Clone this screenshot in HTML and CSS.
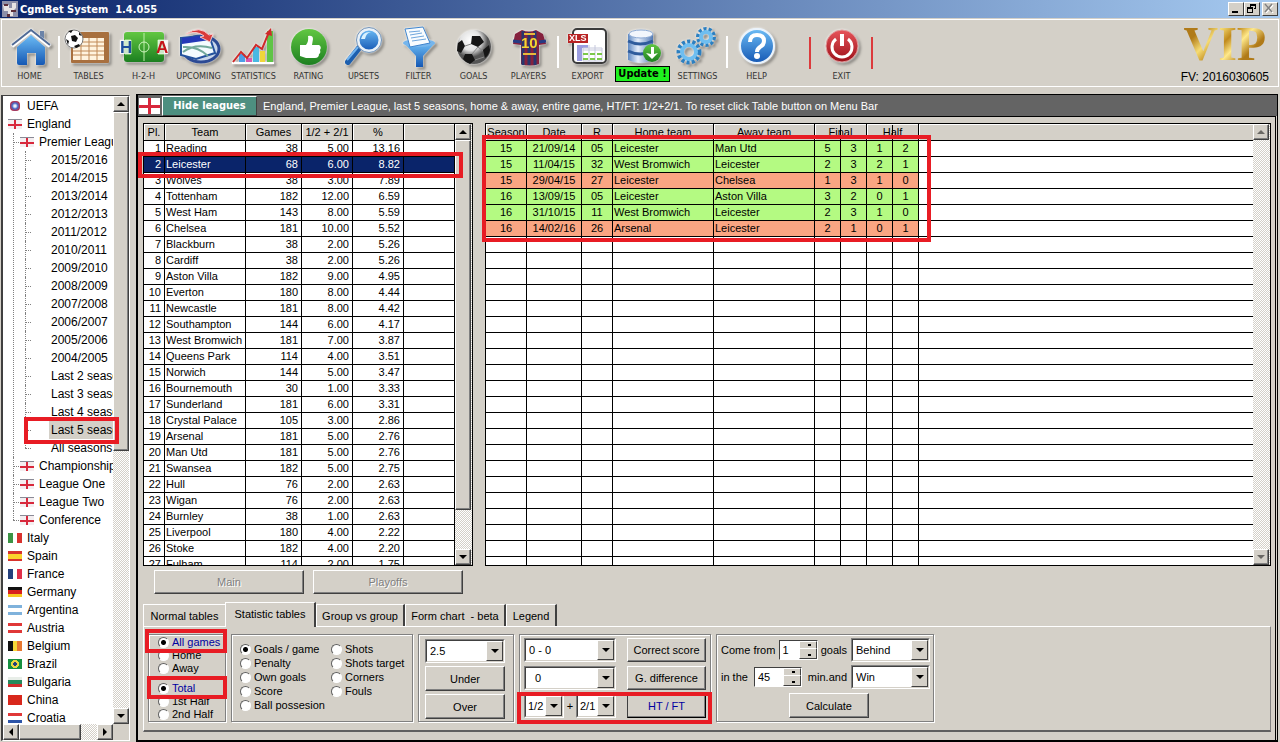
FILE: index.html
```
<!DOCTYPE html>
<html lang="en">
<head>
    <meta charset="utf-8">
    <title>CgmBet System 1.4.055</title>
    <link rel="stylesheet" href="styles.css">
</head>
<body>
    <header class="titlebar">
        <svg class="app-icon" width="16" height="16" viewBox="0 0 16 16"><rect width="16" height="16" fill="#8d8fa8"/><path d="M1 4h6v3h3V2h4v5l-3 3v5H6v-5H2z" fill="#e8e4e4"/><path d="M2 3h4v2H2zM9 9h5v2H9zM5 13h3v3H5z" fill="#5c2f3a"/></svg>
        <h1 class="title">CgmBet System&nbsp; 1.4.055</h1>
        <div class="window-buttons">
            <button class="win-btn" aria-label="Minimize"><svg width="12" height="10"><path d="M3 8h6v2H3z"/></svg></button>
            <button class="win-btn" aria-label="Restore"><svg width="12" height="10"><path d="M5 1h6v5H9V5h1V3H6v1H5zM2 4h6v6H2zM3 6v3h4V6z" fill-rule="evenodd"/></svg></button>
            <button class="win-btn win-close" aria-label="Close"><svg width="12" height="10"><path d="M3 2l7 8M10 2L3 10" stroke="#fff" stroke-width="1.500"/><path d="M2 1l7 8M9 1L2 9" stroke="#808080" stroke-width="1.500"/></svg></button>
        </div>
    </header>

    <nav class="toolbar">
        <button class="tool">
            <svg class="icon" viewBox="0 0 48 42"><path d="M34 5h4v9l-4-4z" fill="#6b83a8"/><path d="M11 21L25 9l14 12v16q0 2-2 2h-7V27h-9v12h-8q-2 0-2-2z" fill="url(#blue)"/><path d="M6 20L25 5l19 15" fill="none" stroke="#fff" stroke-width="4"/><path d="M6 19L25 4l19 15" fill="none" stroke="#516b96" stroke-width="2"/></svg>
            <span>HOME</span>
        </button>
        <i class="sep"></i>
        <button class="tool">
            <svg class="icon" viewBox="0 0 48 42"><rect x="6" y="6" width="38" height="31" rx="1" fill="#a8703f"/><path d="M8 12h31v22H8z" fill="#fff3df"/><path d="M8 16h31M8 20h31M8 25h31M8 29h31M16 12v22M24 12v22M32 12v22" stroke="#c08956"/><circle cx="9" cy="13" r="9" fill="#fff" stroke="#777"/><path d="M6 10l4-1 3 3-2 4-4-1zM3 5l5-1-2 3zM14 6l3 4-3-1zM1 13l3 2-1 4zM9 20l5-2 1 2-4 2z" fill="#111"/></svg>
            <span>TABLES</span>
        </button>
        <button class="tool">
            <svg class="icon" viewBox="0 0 48 42"><rect x="4" y="6" width="40" height="30" rx="3" fill="url(#green)"/><path d="M24 7v28M5 14h6v14H5M44 14h-6v14h6" fill="none" stroke="#bdf0a8"/><circle cx="24" cy="21" r="5" fill="none" stroke="#d0f5c2"/><path d="M0 14h11v14H0zM38 14h10v14H38z" fill="#fff" opacity=".75"/><text x="0" y="27" font-size="17" class="letter" fill="#1d4f9d">H</text><text x="36" y="27" font-size="17" class="letter" fill="#c4141a">A</text></svg>
            <span>H-2-H</span>
        </button>
        <button class="tool">
            <svg class="icon" viewBox="0 0 48 42"><ellipse cx="26" cy="23" rx="18" ry="13" fill="#c8d6ea" stroke="#2c4a94" stroke-width="3"/><path d="M6 12l28-3 6 18-19 6-15-4z" fill="#f4fbff" stroke="#24529d" stroke-width="2"/><path d="M7 12l27-3 1 5-28 4z" fill="#2438b8"/><path d="M8 21q15-1 25 9M8 26q12-9 29-4" fill="none" stroke="#72a99b" stroke-width="2"/><path d="M11 8Q25-1 34 9l4-1-3 8-10-5 4-1Q22 4 11 8z" fill="#d93a3b" stroke="#f6c8c8"/></svg>
            <span>UPCOMING</span>
        </button>
        <button class="tool">
            <svg class="icon" viewBox="0 0 48 42"><path d="M9 28h6v9H9z" fill="#4d9ee8"/><path d="M16 32h6v5h-6z" fill="#d85ab3"/><path d="M23 21h6v16h-6z" fill="#49b8e3"/><path d="M30 25h5v12h-5z" fill="#f0d63a"/><path d="M37 5h6v32h-6z" fill="#5fc447"/><path d="M2 37h42" stroke="#fff" stroke-width="2"/><path d="M3 36l8-10 6 6 9-13 6 4 7-17" fill="none" stroke="#cf2a2b" stroke-width="2"/><path d="M35 8l6-6 1 8z" fill="#cf2a2b"/></svg>
            <span>STATISTICS</span>
        </button>
        <button class="tool">
            <svg class="icon" viewBox="0 0 48 42"><circle cx="24" cy="21" r="18" fill="url(#green)"/><path d="M15 19h6q3-4 2-9 5-1 5 3l-1 6h7q3 2 1 5 1 3-1 4 0 4-4 4H21l-6-2z" fill="#fff"/></svg>
            <span>RATING</span>
        </button>
        <button class="tool">
            <svg class="icon" viewBox="0 0 48 42"><path d="M19 22L8 36" stroke="#1d5fae" stroke-width="6" stroke-linecap="round"/><path d="M18 21L7 34" stroke="#72b4ef" stroke-width="2"/><circle cx="29" cy="14" r="11" fill="url(#blue)" stroke="#e9f1f8" stroke-width="3"/><circle cx="29" cy="14" r="12.500" fill="none" stroke="#7293b8"/><path d="M21 13q2-8 10-7-5 1-6 7z" fill="#d9f2ff"/></svg>
            <span>UPSETS</span>
        </button>
        <button class="tool">
            <svg class="icon" viewBox="0 0 48 42"><path d="M9 17h31L28 30v11h-7V30z" fill="url(#blue)"/><ellipse cx="24" cy="17" rx="16" ry="4" fill="#75b5ec"/><path d="M10 3l18-2 7 16-20 4z" fill="#f8fcff" stroke="#3f85ce"/><path d="M14 6l11-1M15 9l12-2M16 12l13-2M17 15l14-2" stroke="#6fa6dc"/></svg>
            <span>FILTER</span>
        </button>
        <button class="tool">
            <svg class="icon" viewBox="0 0 48 42"><circle cx="24" cy="21" r="17" fill="url(#ball)"/><path d="M22 10l8 0 4 6-6 5-7-3zM8 17l4-3 3 6-4 7-4-2zM15 28l7 0 3 6-5 4q-5-2-7-5zM33 24l6-5 1 5q-1 5-5 8z" fill="#161616"/><path d="M28 21l5 4M21 18l-6 2M28 21l-6 7M25 34l9-3" stroke="#888"/></svg>
            <span>GOALS</span>
        </button>
        <button class="tool">
            <svg class="icon" viewBox="0 0 48 42"><path d="M17 4q7 3 14 0l7 4 3 10-7 1v19q-9 3-18 0V19l-8-1 2-10z" fill="#85213e"/><path d="M18 5v34M24 6v33M30 5v34" stroke="#28366e" stroke-width="3"/><path d="M8 15l8 1M34 16l7-1" stroke="#253b84" stroke-width="3"/><text x="16" y="22" font-size="15" class="letter" fill="#f4d631">10</text><path d="M19 8h11M18 28h13" stroke="#e7b93b" stroke-width="2"/></svg>
            <span>PLAYERS</span>
        </button>
        <i class="sep"></i>
        <button class="tool">
            <svg class="icon" viewBox="0 0 48 42"><rect x="9" y="3" width="33" height="34" rx="4" fill="#fff" stroke="#3b3b3b" stroke-width="2"/><path d="M13 19h5v16h-5zM18 19h6v3h-6z" fill="#9b9de0"/><path d="M19 22h19v13H19z" fill="none" stroke="#c5c8dc"/><path d="M25 19v16M31 19v16M19 24h19" stroke="#c5c8dc"/><path d="M19 28h19M19 33h19" stroke="#7cc84a" stroke-width="2" stroke-dasharray="5 2"/><rect x="4" y="8" width="20" height="9" fill="#b92324"/><text x="5" y="15" font-size="9" class="letter" fill="#fff">XLS</text></svg>
            <span>EXPORT</span>
        </button>
        <button class="tool tool-update">
            <svg class="icon" viewBox="0 0 48 42"><path d="M9 8v26q12 6 25 0V8z" fill="url(#steel)"/><path d="M9 15q12 6 25 0M9 25q12 6 25 0" fill="none" stroke="#2f5c9c" stroke-width="3"/><ellipse cx="22" cy="8" rx="12" ry="4" fill="#f2f6fc" stroke="#8ca9d3"/><circle cx="33" cy="27" r="9" fill="url(#green)"/><path d="M32 21h3v7l4-1-6 6-6-6 5 1z" fill="#fff"/></svg>
            <span class="update">Update !</span>
        </button>
        <button class="tool">
            <svg class="icon" viewBox="0 0 48 42"><g fill="none" stroke="#2c7fc0"><circle cx="15" cy="26" r="10" stroke-width="5" stroke-dasharray="3 2"/><circle cx="32" cy="11" r="8" stroke-width="4" stroke-dasharray="3 2"/></g><g fill="none" stroke="#6fbef0"><circle cx="15" cy="26" r="7" stroke-width="4"/><circle cx="32" cy="11" r="5" stroke-width="4"/></g></svg>
            <span>SETTINGS</span>
        </button>
        <i class="sep"></i>
        <button class="tool">
            <svg class="icon" viewBox="0 0 48 42"><circle cx="24" cy="20" r="17" fill="url(#blue)" stroke="#eaf3fc" stroke-width="2"/><path d="M17 16q0-7 7-7t7 6q0 4-4 6-3 2-3 5" fill="none" stroke="#fff" stroke-width="4"/><circle cx="24" cy="30" r="3" fill="#fff"/></svg>
            <span>HELP</span>
        </button>
        <i class="sep-red"></i>
        <button class="tool">
            <svg class="icon" viewBox="0 0 48 42"><circle cx="24" cy="20" r="16" fill="url(#red)" stroke="#d99" /><path d="M18 13a10 10 0 1 0 12 0" fill="none" stroke="#fff" stroke-width="3"/><path d="M24 8v12" stroke="#fff" stroke-width="4"/></svg>
            <span>EXIT</span>
        </button>
        <i class="sep-red"></i>
        <div class="vip">
            <strong>VIP</strong>
            <span>FV: 2016030605</span>
        </div>
    </nav>

    <svg class="defs" width="0" height="0">
        <defs>
            <linearGradient id="blue" x2="0" y2="1"><stop stop-color="#6cbcf5"/><stop offset="1" stop-color="#1558b4"/></linearGradient>
            <linearGradient id="green" x2="0" y2="1"><stop stop-color="#62c742"/><stop offset="1" stop-color="#1c7f20"/></linearGradient>
            <linearGradient id="red" x2="0" y2="1"><stop stop-color="#e7545a"/><stop offset="1" stop-color="#9c1019"/></linearGradient>
            <linearGradient id="steel"><stop stop-color="#5d88c2"/><stop offset=".4" stop-color="#e6eefa"/><stop offset="1" stop-color="#5179b5"/></linearGradient>
            <radialGradient id="ball" cx=".4" cy=".3"><stop stop-color="#fff"/><stop offset=".6" stop-color="#e2e2e2"/><stop offset="1" stop-color="#555"/></radialGradient>
        </defs>
    </svg>

    <div class="main">
        <aside class="sidebar">
            <div class="tree-view">
                <ul class="tree">
                    <li><i class="flag uefa"></i>UEFA</li>
                    <li><i class="flag england"></i>England
                        <ul class="leagues">
                            <li><i class="flag england"></i>Premier League
                                <ul class="seasons">
                                    <li>2015/2016</li>
                                    <li>2014/2015</li>
                                    <li>2013/2014</li>
                                    <li>2012/2013</li>
                                    <li>2011/2012</li>
                                    <li>2010/2011</li>
                                    <li>2009/2010</li>
                                    <li>2008/2009</li>
                                    <li>2007/2008</li>
                                    <li>2006/2007</li>
                                    <li>2005/2006</li>
                                    <li>2004/2005</li>
                                    <li>Last 2 seasons</li>
                                    <li>Last 3 seasons</li>
                                    <li>Last 4 seasons</li>
                                    <li class="selected">Last 5 seasons</li>
                                    <li>All seasons</li>
                                </ul>
                            </li>
                            <li><i class="flag england"></i>Championship</li>
                            <li><i class="flag england"></i>League One</li>
                            <li><i class="flag england"></i>League Two</li>
                            <li><i class="flag england"></i>Conference</li>
                        </ul>
                    </li>
                    <li><i class="flag italy"></i>Italy</li>
                    <li><i class="flag spain"></i>Spain</li>
                    <li><i class="flag france"></i>France</li>
                    <li><i class="flag germany"></i>Germany</li>
                    <li><i class="flag argentina"></i>Argentina</li>
                    <li><i class="flag austria"></i>Austria</li>
                    <li><i class="flag belgium"></i>Belgium</li>
                    <li><i class="flag brazil"></i>Brazil</li>
                    <li><i class="flag bulgaria"></i>Bulgaria</li>
                    <li><i class="flag china"></i>China</li>
                    <li><i class="flag croatia"></i>Croatia</li>
                </ul>
            </div>
            <div class="scroll-v">
                <button class="arrow up" aria-label="Scroll up"></button>
                <div class="thumb thumb-tree"></div>
                <button class="arrow down" aria-label="Scroll down"></button>
            </div>
            <div class="scroll-h">
                <button class="arrow left" aria-label="Scroll left"></button>
                <div class="thumb"></div>
                <button class="arrow right" aria-label="Scroll right"></button>
            </div>
            <div class="mark mark-season"></div>
        </aside>

        <main class="panel">
            <div class="infobar">
                <i class="flag-big"></i>
                <button class="hide-btn">Hide leagues</button>
                <span>England, Premier League, last 5 seasons, home &amp; away, entire game, HT/FT: 1/2+2/1. To reset click Table button on Menu Bar</span>
            </div>

            <div class="content">
                <div class="grids">
                    <div class="grid-wrap standings-wrap">
                        <div class="grid">
                            <table class="standings">
                                <colgroup><col class="c-pl"><col class="c-team"><col class="c-games"><col class="c-num"><col class="c-num"><col class="c-num"></colgroup>
                                <thead>
                                    <tr><th>Pl.</th><th>Team</th><th>Games</th><th>1/2 + 2/1</th><th>%</th><th></th></tr>
                                </thead>
                                <tbody id="standings"></tbody>
                            </table>
                        </div>
                        <div class="scroll-v">
                            <button class="arrow up" aria-label="Scroll up"></button>
                            <div class="thumb thumb-grid"></div>
                            <button class="arrow down" aria-label="Scroll down"></button>
                        </div>
                        <div class="mark mark-row"></div>
                    </div>

                    <div class="grid-wrap results-wrap">
                        <div class="grid">
                            <table class="results">
                                <colgroup><col class="c-season"><col class="c-date"><col class="c-round"><col class="c-club"><col class="c-club"><col class="c-goal"><col class="c-goal"><col class="c-goal"><col class="c-goal"><col></colgroup>
                                <thead>
                                    <tr><th>Season</th><th>Date</th><th>R</th><th>Home team</th><th>Away team</th><th colspan="2" class="split">Final</th><th colspan="2" class="split">Half</th><th></th></tr>
                                </thead>
                                <tbody id="results"></tbody>
                            </table>
                        </div>
                        <div class="scroll-v">
                            <button class="arrow up" aria-label="Scroll up" disabled></button>
                            <button class="arrow down" aria-label="Scroll down" disabled></button>
                        </div>
                        <div class="mark mark-results"></div>
                    </div>
                </div>

                <div class="stage-buttons">
                    <button class="btn" disabled>Main</button>
                    <button class="btn" disabled>Playoffs</button>
                </div>

                <div class="tabs" role="tablist">
                    <button class="tab tab-normal" role="tab">Normal tables</button>
                    <button class="tab tab-stat active" role="tab" aria-selected="true">Statistic tables</button>
                    <button class="tab tab-group" role="tab">Group vs group</button>
                    <button class="tab tab-form" role="tab">Form chart&nbsp; - beta</button>
                    <button class="tab tab-legend" role="tab">Legend</button>
                </div>

                <div class="pane">
                    <div class="box box-scope">
                        <div class="radios">
                            <label class="on"><input type="radio" name="venue" checked>All games</label>
                            <label><input type="radio" name="venue">Home</label>
                            <label><input type="radio" name="venue">Away</label>
                        </div>
                        <div class="radios">
                            <label class="on"><input type="radio" name="period" checked>Total</label>
                            <label><input type="radio" name="period">1st Half</label>
                            <label><input type="radio" name="period">2nd Half</label>
                        </div>
                        <div class="mark mark-all"></div>
                        <div class="mark mark-total"></div>
                    </div>

                    <div class="box box-stat">
                        <div class="radios">
                            <label><input type="radio" name="stat" checked>Goals / game</label>
                            <label><input type="radio" name="stat">Penalty</label>
                            <label><input type="radio" name="stat">Own goals</label>
                            <label><input type="radio" name="stat">Score</label>
                            <label><input type="radio" name="stat">Ball possesion</label>
                        </div>
                        <div class="radios">
                            <label><input type="radio" name="stat">Shots</label>
                            <label><input type="radio" name="stat">Shots target</label>
                            <label><input type="radio" name="stat">Corners</label>
                            <label><input type="radio" name="stat">Fouls</label>
                        </div>
                    </div>

                    <div class="box box-line">
                        <span class="combo"><select aria-label="Goal line"><option>2.5</option></select></span>
                        <button class="btn">Under</button>
                        <button class="btn">Over</button>
                    </div>

                    <div class="box box-score">
                        <span class="combo"><select aria-label="Correct score"><option>0 - 0</option></select></span>
                        <button class="btn">Correct score</button>
                        <span class="combo"><select aria-label="Goal difference"><option>&nbsp;&nbsp;0</option></select></span>
                        <button class="btn">G. difference</button>
                        <div class="pair">
                            <span class="combo"><select aria-label="Half time"><option>1/2</option></select></span>
                            <span>+</span>
                            <span class="combo"><select aria-label="Full time"><option>2/1</option></select></span>
                        </div>
                        <button class="btn default">HT / FT</button>
                        <div class="mark mark-htft"></div>
                    </div>

                    <div class="box box-come">
                        <div class="line">
                            <label for="goals">Come from</label>
                            <span class="spin"><input type="number" id="goals" value="1"><i></i></span>
                            <span>goals</span>
                        </div>
                        <span class="combo"><select aria-label="State"><option>Behind</option></select></span>
                        <div class="line">
                            <label for="minute">in the</label>
                            <span class="spin spin-wide"><input type="number" id="minute" value="45"><i></i></span>
                            <span>min.and</span>
                        </div>
                        <span class="combo"><select aria-label="Outcome"><option>Win</option></select></span>
                        <button class="btn calc">Calculate</button>
                    </div>
                </div>
            </div>
        </main>
    </div>

    <script>
        const standings = [
            ['Reading', 38, '5.00', '13.16'],
            ['Leicester', 68, '6.00', '8.82'],
            ['Wolves', 38, '3.00', '7.89'],
            ['Tottenham', 182, '12.00', '6.59'],
            ['West Ham', 143, '8.00', '5.59'],
            ['Chelsea', 181, '10.00', '5.52'],
            ['Blackburn', 38, '2.00', '5.26'],
            ['Cardiff', 38, '2.00', '5.26'],
            ['Aston Villa', 182, '9.00', '4.95'],
            ['Everton', 180, '8.00', '4.44'],
            ['Newcastle', 181, '8.00', '4.42'],
            ['Southampton', 144, '6.00', '4.17'],
            ['West Bromwich', 181, '7.00', '3.87'],
            ['Queens Park', 114, '4.00', '3.51'],
            ['Norwich', 144, '5.00', '3.47'],
            ['Bournemouth', 30, '1.00', '3.33'],
            ['Sunderland', 181, '6.00', '3.31'],
            ['Crystal Palace', 105, '3.00', '2.86'],
            ['Arsenal', 181, '5.00', '2.76'],
            ['Man Utd', 181, '5.00', '2.76'],
            ['Swansea', 182, '5.00', '2.75'],
            ['Hull', 76, '2.00', '2.63'],
            ['Wigan', 76, '2.00', '2.63'],
            ['Burnley', 38, '1.00', '2.63'],
            ['Liverpool', 180, '4.00', '2.22'],
            ['Stoke', 182, '4.00', '2.20'],
            ['Fulham', 114, '2.00', '1.75']
        ];

        const results = [
            ['win', '15', '21/09/14', '05', 'Leicester', 'Man Utd', 5, 3, 1, 2],
            ['win', '15', '11/04/15', '32', 'West Bromwich', 'Leicester', 2, 3, 2, 1],
            ['loss', '15', '29/04/15', '27', 'Leicester', 'Chelsea', 1, 3, 1, 0],
            ['win', '16', '13/09/15', '05', 'Leicester', 'Aston Villa', 3, 2, 0, 1],
            ['win', '16', '31/10/15', '11', 'West Bromwich', 'Leicester', 2, 3, 1, 0],
            ['loss', '16', '14/02/16', '26', 'Arsenal', 'Leicester', 2, 1, 0, 1]
        ];

        function addRow(body, cells, className) {
            const row = body.insertRow();
            row.className = className;
            cells.forEach(text => {
                row.insertCell().textContent = text;
            });
        }

        const standingsBody = document.getElementById('standings');
        standings.forEach((team, i) => {
            addRow(standingsBody, [i + 1, ...team, ''], team[0] === 'Leicester' ? 'current' : '');
        });

        // fill the rest of the grid with empty rows
        const resultsBody = document.getElementById('results');
        for (let i = 0; i < standings.length; i++) {
            const [type, ...cells] = results[i] || ['', '', '', '', '', '', '', '', '', ''];
            addRow(resultsBody, [...cells, ''], type);
        }
    </script>
</body>
</html>
```
FILE: styles.css
```
* {
    box-sizing: border-box;
}
body {
    margin: 0;
    height: 100vh;
    display: flex;
    flex-direction: column;
    overflow: hidden;
    background: #d4d0c8;
    color: #000;
    font-family: "Liberation Sans", Arial, sans-serif;
    font-size: 11px;
}
button, select, input {
    font: inherit;
    color: inherit;
    margin: 0;
    padding: 0;
    border-radius: 0;
}
ul {
    list-style: none;
    margin: 0;
    padding: 0;
}
.defs {
    position: absolute;
}

/* title bar */
.titlebar {
    height: 18px;
    flex: none;
    display: flex;
    align-items: center;
    padding: 0 2px;
    background: linear-gradient(90deg, #0a246a, #a6caf0);
}
.title {
    flex: 1;
    margin: 0 0 0 2px;
    color: #fff;
    font-family: "DejaVu Sans Condensed", "DejaVu Sans", sans-serif;
    font-size: 11px;
}
.window-buttons {
    display: flex;
}
.win-btn {
    width: 16px;
    height: 14px;
    display: flex;
    background: #d4d0c8;
    border: 1px solid;
    border-color: #fff #404040 #404040 #fff;
}
.win-close {
    margin-left: 2px;
}

/* toolbar */
.toolbar {
    height: 68px;
    flex: none;
    display: flex;
    margin: 1px 1px 7px;
    border: 1px solid #fff;
}
.tool {
    width: 55px;
    display: flex;
    flex-direction: column;
    align-items: center;
    padding-top: 6px;
    background: none;
    border: 0;
    color: #333;
    font-family: "DejaVu Sans Condensed", "DejaVu Sans", sans-serif;
    font-size: 9px;
    line-height: 12px;
}
.icon {
    width: 48px;
    height: 42px;
    margin-bottom: 2px;
    overflow: visible;
    filter: drop-shadow(0 0 1px #fff) drop-shadow(2px 2px 1px rgba(0, 0, 0, .35));
}
.letter {
    font-family: "Liberation Sans", Arial, sans-serif;
    font-weight: bold;
}
.sep {
    width: 2px;
    height: 32px;
    margin: 16px 1px 0;
    background: #fff;
}
.sep-red {
    width: 2px;
    height: 32px;
    margin: 17px 3px 0 2px;
    background: #dc3a3c;
}
.sep + .tool + .sep-red {
    margin-left: 25px;
}
.tool-update .icon {
    margin-bottom: 0;
}
.update {
    width: 55px;
    height: 16px;
    margin-top: -2px;
    border: 1px solid #000;
    background: #1ff21f;
    color: #000;
    font-size: 11px;
    font-weight: bold;
    line-height: 14px;
    z-index: 1;
}
.vip {
    margin-left: auto;
    padding-right: 9px;
    display: flex;
    flex-direction: column;
    align-items: center;
    font-size: 12px;
}
.vip strong {
    margin-bottom: 2px;
    font-family: "Liberation Serif", serif;
    font-size: 48px;
    line-height: 48px;
    color: transparent;
    background: linear-gradient(135deg, #b07a18 20%, #f6dc74 35%, #c08a1c 48%, #ffe98a 60%, #b07a18 75%);
    background-clip: text;
    -webkit-background-clip: text;
}

.main {
    flex: 1;
    min-height: 0;
    display: grid;
    grid-template-columns: 129px 1fr;
    gap: 6px;
    padding: 0 2px 0 1px;
}

/* league tree */
.sidebar {
    position: relative;
    display: grid;
    grid-template: 1fr 16px / 1fr 16px;
    min-height: 0;
    margin: 1px 0;
    border: 1px solid;
    border-color: #404040 #fff #fff #404040;
    border-left-width: 2px;
    background: #d4d0c8;
}
.tree-view {
    min-height: 0;
    overflow: hidden;
    background: #fff;
}
.tree {
    padding: 1px 0 0 5px;
    font-size: 12px;
    line-height: 18px;
    white-space: nowrap;
}
.leagues > li {
    position: relative;
    padding-left: 12px;
}
.leagues > li::before, .seasons > li::before {
    content: "";
    position: absolute;
    left: 5px;
    top: 0;
    height: 100%;
    border-left: 1px dotted #808080;
}
.leagues > li::after, .seasons > li::after {
    content: "";
    position: absolute;
    left: 5px;
    top: 9px;
    width: 6px;
    border-top: 1px dotted #808080;
}
.leagues > li:last-child::before, .seasons > li:last-child::before {
    height: 9px;
}
.seasons > li {
    position: relative;
    padding-left: 31px;
}
.seasons > .selected {
    background: linear-gradient(#d4d0c8, #d4d0c8) 29px 0 no-repeat;
}
.flag {
    display: inline-block;
    width: 14px;
    height: 10px;
    margin-right: 5px;
    vertical-align: -1px;
}
.uefa {
    width: 10px;
    margin: 0 7px 0 2px;
    border-radius: 4px;
    background: radial-gradient(#e8eefc 15%, #4a6bc8 40%, #b03050 70%);
}
.england {
    background: linear-gradient(#d8283c, #d8283c) 0 4px / 100% 2px no-repeat, linear-gradient(#d8283c, #d8283c) 6px 0 / 2px 100% no-repeat, #f4eef0;
    border-top: 1px solid #8a8a96;
}
.italy {
    background: linear-gradient(90deg, #3c9344 33%, #fff 33% 67%, #d9322e 67%);
}
.spain {
    background: linear-gradient(#d8322c 25%, #fbd22c 25% 75%, #d8322c 75%);
}
.france {
    background: linear-gradient(90deg, #24407c 33%, #fff 33% 67%, #e0304a 67%);
}
.germany {
    background: linear-gradient(#111 33%, #d8201c 33% 67%, #f8c820 67%);
}
.argentina {
    background: linear-gradient(#7fb2dc 33%, #fff 33% 67%, #7fb2dc 67%);
}
.austria {
    background: linear-gradient(#e03838 33%, #fff 33% 67%, #e03838 67%);
}
.belgium {
    background: linear-gradient(90deg, #111 33%, #f8d838 33% 67%, #e87830 67%);
}
.brazil {
    background: radial-gradient(circle, #24407c 2px, #e8d840 2px 4px, #169040 4px);
}
.bulgaria {
    background: linear-gradient(#e8eee8 33%, #258a5c 33% 67%, #d02c2c 67%);
}
.china {
    background: #d8281c;
}
.croatia {
    background: linear-gradient(#e03838 33%, #fff 33% 67%, #2c54a8 67%);
}

/* scroll bars */
.scroll-v, .scroll-h {
    display: flex;
    justify-content: space-between;
    background: repeating-conic-gradient(#fff 0 25%, #d4d0c8 0 50%) 0 0 / 2px 2px;
}
.scroll-v {
    flex-direction: column;
    width: 16px;
}
.arrow, .thumb {
    background: #d4d0c8;
    border: 1px solid;
    border-color: #fff #404040 #404040 #fff;
    box-shadow: inset -1px -1px #808080;
}
.arrow {
    width: 16px;
    height: 16px;
    flex: none;
    display: flex;
    align-items: center;
    justify-content: center;
}
.arrow::before {
    content: "";
    border: 4px solid transparent;
}
.arrow.up::before {
    border-top: 0;
    border-bottom-color: #000;
}
.arrow.down::before {
    border-bottom: 0;
    border-top-color: #000;
}
.arrow.left::before {
    border-left: 0;
    border-right-color: #000;
}
.arrow.right::before {
    border-right: 0;
    border-left-color: #000;
}
.arrow:disabled::before {
    opacity: .5;
}
.thumb + .arrow {
    margin-top: auto;
}
.thumb-tree {
    height: 54%;
}
.thumb-grid {
    height: 84%;
}
.scroll-h {
    justify-content: flex-start;
}
.scroll-h .thumb {
    width: 62px;
    margin-right: auto;
}
.scroll-h .arrow {
    margin: 0;
}

/* main panel */
.panel {
    min-width: 0;
    min-height: 0;
    display: flex;
    flex-direction: column;
    border: 1px solid #000;
    border-width: 1px 1px 2px 2px;
}
.infobar {
    height: 21px;
    flex: none;
    display: flex;
    align-items: center;
    padding-left: 1px;
    background: #646464;
    color: #fff;
}
.flag-big {
    width: 21px;
    height: 16px;
    margin-right: 2px;
    background: linear-gradient(#d8283c, #d8283c) 0 7px / 100% 3px no-repeat, linear-gradient(#d8283c, #d8283c) 9px 0 / 3px 100% no-repeat, #fff;
}
.hide-btn {
    width: 95px;
    height: 20px;
    margin-right: 6px;
    background: #4d8f80;
    border: 1px solid;
    border-color: #fff #404040 #404040 #fff;
    font-family: "DejaVu Sans Condensed", "DejaVu Sans", sans-serif;
    font-weight: bold;
}
.content {
    flex: 1;
    min-height: 0;
    display: flex;
    flex-direction: column;
    margin-right: 1px;
    padding: 6px 4px 8px 5px;
    border: 1px solid #000;
    border-width: 1px 1px 0 0;
}
.grids {
    flex: 1;
    min-height: 0;
    display: grid;
    grid-template-columns: 330px 1fr;
    gap: 12px;
}
.grid-wrap {
    position: relative;
    display: flex;
    min-width: 0;
    min-height: 0;
    border: 1px solid #000;
}
.grid {
    flex: 1;
    min-width: 0;
    overflow: hidden;
    background: #fff;
}
.grid-wrap .scroll-v {
    width: 17px;
    padding-right: 1px;
}
table {
    width: 100%;
    table-layout: fixed;
    border-collapse: separate;
    border-spacing: 0;
    line-height: 15px;
    white-space: nowrap;
}
th, td {
    height: 16px;
    padding: 0 3px 0 1px;
    overflow: hidden;
    border: 0 solid #000;
    border-width: 0 1px 1px 0;
}
th {
    height: 17px;
    padding: 0;
    background: #d4d0c8;
    box-shadow: inset 1px 1px #fff;
    font-weight: normal;
}
.split {
    background: linear-gradient(#000, #000) 25px 0 / 1px 100% no-repeat #d4d0c8;
}
.c-pl { width: 21px; }
.c-team { width: 81px; }
.c-games { width: 56px; }
.c-num { width: 51px; }
.c-season { width: 41px; }
.c-date { width: 55px; }
.c-round { width: 31px; }
.c-club { width: 101px; }
.c-goal { width: 26px; }
.standings td {
    text-align: right;
}
.standings td:nth-child(2) {
    text-align: left;
}
.current td {
    background: #0a246a;
    color: #fff;
}
.results td {
    padding: 0 1px;
    text-align: center;
}
.results td:nth-child(4), .results td:nth-child(5) {
    text-align: left;
}
.results td:last-child, .results th:last-child {
    border-right: 0;
}
.win td:not(:last-child) {
    background: #b4fa82;
}
.loss td:not(:last-child) {
    background: #faa582;
}

.btn {
    background: #d4d0c8;
    border: 1px solid;
    border-color: #fff #404040 #404040 #fff;
    box-shadow: inset -1px -1px #808080;
}
.btn:disabled {
    color: #808080;
    text-shadow: 1px 1px #fff;
}
.stage-buttons {
    display: flex;
    gap: 9px;
    margin: 4px 0 8px 11px;
}
.stage-buttons .btn {
    width: 150px;
    height: 24px;
}

/* tabs */
.tabs {
    display: flex;
    align-items: flex-end;
}
.tab {
    height: 22px;
    background: #d4d0c8;
    border: 1px solid;
    border-color: #fff #404040 transparent #fff;
    border-right-width: 2px;
    border-bottom: 0;
}
.tab.active {
    height: 25px;
    margin-bottom: -1px;
    padding-bottom: 3px;
    z-index: 1;
}
.tab-normal {
    width: 82px;
    border-right: 0;
}
.tab-stat { width: 91px; }
.tab-group { width: 89px; }
.tab-form { width: 101px; }
.tab-legend { width: 51px; }

.pane {
    flex: none;
    display: flex;
    gap: 5px;
    padding: 7px 4px 8px;
    border: 1px solid #fff;
    border-right-color: #808080;
    border-bottom: 2px solid #606060;
}
.box {
    position: relative;
    height: 88px;
    border: 1px solid #808080;
    box-shadow: inset 1px 1px #fff, 1px 1px #fff;
}
.radios label {
    display: flex;
    align-items: center;
    line-height: 14px;
    white-space: nowrap;
}
.radios input {
    appearance: none;
    width: 11px;
    height: 11px;
    margin-right: 3px;
    border: 1px solid;
    border-color: #606060 #fff #fff #606060;
    border-radius: 50%;
    background: #fff;
}
.radios input:checked {
    background: radial-gradient(circle, #000 2px, #fff 3px);
}
.radios .on {
    color: #0000a0;
}
.box-scope {
    width: 78px;
    display: flex;
    flex-direction: column;
    gap: 7px;
    padding: 1px 0 0 9px;
}
.box-scope label {
    line-height: 13px;
}
.box-stat {
    width: 182px;
    display: grid;
    grid-template-columns: 91px 1fr;
    padding: 7px 0 0 8px;
}
.box-line {
    width: 96px;
    display: flex;
    flex-direction: column;
    gap: 3px;
    padding: 4px 8px 0 6px;
}
.box-line .btn {
    height: 25px;
}
.combo {
    position: relative;
    display: block;
    height: 24px;
    border: 1px solid;
    border-color: #808080 #fff #fff #808080;
}
.combo select {
    appearance: none;
    width: 100%;
    height: 100%;
    padding: 0 16px 0 3px;
    border: 1px solid;
    border-color: #404040 #d4d0c8 #d4d0c8 #404040;
    background: #fff;
}
.combo::before {
    content: "";
    position: absolute;
    right: 1px;
    top: 1px;
    bottom: 1px;
    width: 15px;
    background: #d4d0c8;
    border: 1px solid;
    border-color: #fff #404040 #404040 #fff;
    pointer-events: none;
}
.combo::after {
    content: "";
    position: absolute;
    right: 5px;
    top: 9px;
    border: 4px solid transparent;
    border-top-color: #000;
    border-bottom: 0;
    pointer-events: none;
}
.box-score {
    width: 192px;
    display: grid;
    grid-template-columns: 92px 79px;
    grid-auto-rows: 24px;
    gap: 4px 11px;
    padding: 3px 0 0 4px;
}
.pair {
    display: grid;
    grid-template-columns: 40px 1fr 40px;
    align-items: center;
    text-align: center;
}
.pair select {
    padding: 0 14px 0 2px;
}
.btn.default {
    border-color: #fff #000 #000 #404040;
    color: #0000a0;
}
.box-come {
    width: 218px;
    display: grid;
    grid-template-columns: 126px 79px;
    grid-auto-rows: 24px;
    gap: 3px 4px;
    padding: 3px 0 0 4px;
}
.line {
    display: flex;
    align-items: center;
    justify-content: space-between;
}
.spin {
    position: relative;
    width: 39px;
    height: 20px;
    border: 1px solid;
    border-color: #404040 #fff #fff #404040;
    background: #fff;
}
.spin-wide {
    width: 48px;
}
.spin input {
    appearance: textfield;
    width: 100%;
    height: 100%;
    padding-left: 3px;
    border: 0;
    background: none;
}
.spin input::-webkit-inner-spin-button {
    appearance: none;
}
.spin::before, .spin::after {
    content: "";
    position: absolute;
    right: 0;
    width: 16px;
    height: 9px;
    background: #d4d0c8;
    border: 1px solid;
    border-color: #fff #404040 #404040 #fff;
    pointer-events: none;
}
.spin::before {
    top: 0;
}
.spin::after {
    bottom: 0;
}
.spin i {
    position: absolute;
    right: 6px;
    top: 3px;
    z-index: 1;
    width: 3px;
    height: 12px;
    background: linear-gradient(#000, #000) 50% 0 / 3px 2px no-repeat, linear-gradient(#000, #000) 50% 100% / 3px 2px no-repeat;
    pointer-events: none;
}
.calc {
    grid-column: 1 / -1;
    width: 80px;
    height: 25px;
    margin: 1px 0 0 68px;
}

/* red highlight frames */
.mark {
    position: absolute;
    border: 4px solid #e81c24;
    pointer-events: none;
    z-index: 2;
}
.mark-season {
    left: 21px;
    right: 10px;
    top: 321px;
    height: 27px;
}
.mark-row {
    left: -6px;
    right: 9px;
    top: 28px;
    height: 26px;
}
.mark-results {
    left: -4px;
    width: 449px;
    top: 11px;
    height: 107px;
}
.mark-all {
    left: -4px;
    right: -2px;
    top: -6px;
    height: 24px;
}
.mark-total {
    left: -2px;
    right: -2px;
    top: 41px;
    height: 23px;
}
.mark-htft {
    left: -3px;
    right: -2px;
    top: 57px;
    height: 32px;
}
```
